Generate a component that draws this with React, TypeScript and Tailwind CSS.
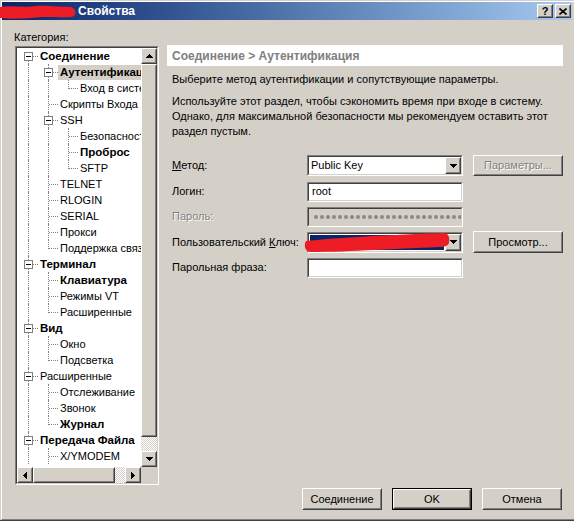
import React from "react";

type Row = {
  t: string;
  l: number;
  b?: boolean;
  e?: boolean;
  last?: boolean;
  first?: boolean;
  sel?: boolean;
  anc: boolean[];
};

const rows: Row[] = [
  { t: "Соединение", l: 0, b: true, e: true, first: true, anc: [] },
  { t: "Аутентификация", l: 1, b: true, e: true, sel: true, anc: [true] },
  { t: "Вход в систему", l: 2, last: true, anc: [true, true] },
  { t: "Скрипты Входа", l: 1, anc: [true] },
  { t: "SSH", l: 1, e: true, anc: [true] },
  { t: "Безопасность", l: 2, anc: [true, true] },
  { t: "Проброс", l: 2, b: true, anc: [true, true] },
  { t: "SFTP", l: 2, last: true, anc: [true, true] },
  { t: "TELNET", l: 1, anc: [true] },
  { t: "RLOGIN", l: 1, anc: [true] },
  { t: "SERIAL", l: 1, anc: [true] },
  { t: "Прокси", l: 1, anc: [true] },
  { t: "Поддержка связи", l: 1, last: true, anc: [true] },
  { t: "Терминал", l: 0, b: true, e: true, anc: [] },
  { t: "Клавиатура", l: 1, b: true, anc: [true] },
  { t: "Режимы VT", l: 1, anc: [true] },
  { t: "Расширенные", l: 1, last: true, anc: [true] },
  { t: "Вид", l: 0, b: true, e: true, anc: [] },
  { t: "Окно", l: 1, anc: [true] },
  { t: "Подсветка", l: 1, last: true, anc: [true] },
  { t: "Расширенные", l: 0, e: true, anc: [] },
  { t: "Отслеживание", l: 1, anc: [true] },
  { t: "Звонок", l: 1, anc: [true] },
  { t: "Журнал", l: 1, b: true, last: true, anc: [true] },
  { t: "Передача Файла", l: 0, b: true, e: true, anc: [] },
  { t: "X/YMODEM", l: 1, anc: [true] },
];

function Raised({
  className = "",
  inner = "",
  children,
}: {
  className?: string;
  inner?: string;
  children?: React.ReactNode;
}) {
  return (
    <div
      className={`border border-t-white border-l-white border-r-[#404040] border-b-[#404040] bg-[#d4d0c8] ${className}`}
    >
      <div
        className={`h-full w-full border border-t-[#d4d0c8] border-l-[#d4d0c8] border-r-[#808080] border-b-[#808080] ${inner}`}
      >
        {children}
      </div>
    </div>
  );
}

function Sunken({
  className = "",
  inner = "",
  children,
}: {
  className?: string;
  inner?: string;
  children?: React.ReactNode;
}) {
  return (
    <div
      className={`border border-t-[#808080] border-l-[#808080] border-r-white border-b-white ${className}`}
    >
      <div
        className={`h-full w-full border border-t-[#404040] border-l-[#404040] border-r-[#d4d0c8] border-b-[#d4d0c8] ${inner}`}
      >
        {children}
      </div>
    </div>
  );
}

function Arrow({ d }: { d: "up" | "down" | "left" | "right" }) {
  if (d === "up" || d === "down") {
    const r =
      d === "up"
        ? [
            [3, 0, 1],
            [2, 1, 3],
            [1, 2, 5],
            [0, 3, 7],
          ]
        : [
            [0, 0, 7],
            [1, 1, 5],
            [2, 2, 3],
            [3, 3, 1],
          ];
    return (
      <svg width="7" height="4" viewBox="0 0 7 4" shapeRendering="crispEdges">
        {r.map(([x, y, w], i) => (
          <rect key={i} x={x} y={y} width={w} height={1} fill="#000" />
        ))}
      </svg>
    );
  }
  const r =
    d === "left"
      ? [
          [0, 3, 1],
          [1, 2, 3],
          [2, 1, 5],
          [3, 0, 7],
        ]
      : [
          [0, 0, 7],
          [1, 1, 5],
          [2, 2, 3],
          [3, 3, 1],
        ];
  return (
    <svg width="4" height="7" viewBox="0 0 4 7" shapeRendering="crispEdges">
      {r.map(([x, y, h], i) => (
        <rect key={i} x={x} y={y} width={1} height={h} fill="#000" />
      ))}
    </svg>
  );
}

function SBtn({ d }: { d: "up" | "down" | "left" | "right" }) {
  return (
    <Raised
      className="h-[16px] w-[16px] shrink-0"
      inner="flex items-center justify-center"
    >
      <Arrow d={d} />
    </Raised>
  );
}

function TreeRow({ r }: { r: Row }) {
  return (
    <div className="flex h-[16px] items-center whitespace-nowrap">
      {r.anc.map((c, i) => (
        <div key={i} className="relative h-[16px] w-[20px] shrink-0">
          {c && (
            <div className="absolute left-[10px] top-0 h-[16px] border-l border-dotted border-[#808080]" />
          )}
        </div>
      ))}
      <div className="relative h-[16px] w-[20px] shrink-0">
        <div
          className={`absolute left-[10px] border-l border-dotted border-[#808080] ${
            r.first ? "top-[8px] h-[8px]" : r.last ? "top-0 h-[9px]" : "top-0 h-[16px]"
          }`}
        />
        <div className="absolute left-[11px] top-[8px] w-[9px] border-t border-dotted border-[#808080]" />
        {r.e && (
          <div className="absolute left-[6px] top-[4px] flex h-[9px] w-[9px] items-center justify-center border border-[#808080] bg-white">
            <div className="h-[1px] w-[5px] bg-black" />
          </div>
        )}
      </div>
      <span
        className={`h-[15px] px-[2px] leading-[15px] ${r.b ? "text-[11.5px] font-bold" : ""} ${
          r.sel ? "bg-[#d4d0c8]" : ""
        }`}
      >
        {r.t}
      </span>
    </div>
  );
}

function Btn({
  label,
  w = "w-[80px]",
  disabled = false,
  def = false,
  h = "h-[22px]",
}: {
  label: string;
  w?: string;
  disabled?: boolean;
  def?: boolean;
  h?: string;
}) {
  const text = (
    <span
      className={
        disabled
          ? "text-[#808080] [text-shadow:1px_1px_0_#ffffff]"
          : "text-black"
      }
    >
      {label}
    </span>
  );
  if (def) {
    return (
      <div className={`${w} ${h} shrink-0 border border-black`}>
        <Raised className="h-full w-full" inner="flex items-center justify-center">
          {text}
        </Raised>
      </div>
    );
  }
  return (
    <Raised className={`${w} ${h} shrink-0`} inner="flex items-center justify-center">
      {text}
    </Raised>
  );
}

function DropBtn() {
  return (
    <Raised
      className="h-[17px] w-[16px] shrink-0"
      inner="flex items-center justify-center"
    >
      <Arrow d="down" />
    </Raised>
  );
}

export default function App() {
  return (
    <div className="h-[521px] w-[574px] overflow-hidden border-b border-b-[#404040] bg-[#d4d0c8] pl-[1px] pt-[1px] text-[11px] text-black font-['Liberation_Sans',Arial,sans-serif]">
      <div className="h-full border-l border-t border-b border-l-white border-t-white border-b-[#808080]">
        {/* Title bar */}
        <div className="mr-[2px] flex h-[18px] items-center bg-linear-to-r from-[#0a246a] to-[#a6caf0]">
          <svg width="76" height="18" viewBox="0 0 76 18" className="-ml-[2px] shrink-0">
            <path
              d="M0 5 C12 3 24 6 36 4 C48 3 60 5 71 5 C77 7 77 14 71 15 C58 16 46 14 32 16 C20 17 9 17 0 16 Z"
              fill="#ee1c24"
            />
          </svg>
          <span className="ml-[2px] text-[12px] font-bold text-white">Свойства</span>
          <div className="ml-auto flex items-center gap-[2px] pr-[1px]">
            <Raised className="h-[14px] w-[16px]" inner="flex items-center justify-center">
              <span className="text-[11px] font-bold leading-none">?</span>
            </Raised>
            <Raised className="h-[14px] w-[16px]" inner="flex items-center justify-center">
              <svg width="8" height="7" viewBox="0 0 8 7">
                <path d="M0.5 0.5 L7.5 6.5 M7.5 0.5 L0.5 6.5" stroke="#000" strokeWidth="1.6" />
              </svg>
            </Raised>
          </div>
        </div>

        {/* Body */}
        <div className="flex pl-[13px]">
          {/* Left column */}
          <div className="flex w-[144px] shrink-0 flex-col pt-[10px]">
            <div className="-ml-[1px] h-[14px] leading-[14px]">Категория:</div>
            <Sunken className="mt-[2px] h-[439px] w-[144px]" inner="flex flex-col">
              <div className="flex h-[419px]">
                <div className="h-[419px] w-[124px] overflow-hidden bg-white pl-[1px]">
                  {rows.map((r, i) => (
                    <TreeRow key={i} r={r} />
                  ))}
                </div>
                <div className="flex h-[419px] w-[16px] flex-col">
                  <SBtn d="up" />
                  <Raised className="h-[373px] w-[16px]" />
                  <div className="h-[14px] w-[16px] bg-[image:repeating-conic-gradient(#ffffff_0_25%,#d4d0c8_0_50%)] bg-[length:2px_2px]" />
                  <SBtn d="down" />
                </div>
              </div>
              <div className="flex h-[16px]">
                <SBtn d="left" />
                <Raised className="h-[16px] w-[82px]" />
                <div className="h-[16px] w-[10px] bg-[image:repeating-conic-gradient(#ffffff_0_25%,#d4d0c8_0_50%)] bg-[length:2px_2px]" />
                <SBtn d="right" />
                <div className="h-[16px] w-[16px] bg-[#d4d0c8]" />
              </div>
            </Sunken>
          </div>

          {/* Right column */}
          <div className="ml-[8px] w-[396px] shrink-0 pt-[25px]">
            <div className="flex h-[21px] items-center bg-white pl-[5px] text-[12px] font-bold text-[#808080]">
              Соединение &gt; Аутентификация
            </div>
            <div className="mt-[6px] whitespace-nowrap pl-[5px] leading-[15px]">
              Выберите метод аутентификации и сопутствующие параметры.
            </div>
            <div className="mt-[7px] whitespace-nowrap pl-[5px] leading-[15px]">
              Используйте этот раздел, чтобы сэкономить время при входе в систему.
              <br />
              Однако, для максимальной безопасности мы рекомендуем оставить этот
              <br />
              раздел пустым.
            </div>

            <div className="mt-[16px] flex flex-col pl-[5px]">
              {/* Метод */}
              <div className="flex h-[21px] items-center">
                <div className="w-[135px] shrink-0">
                  <span className="underline">М</span>етод:
                </div>
                <Sunken className="h-[21px] w-[156px] shrink-0" inner="flex items-center bg-white pl-[2px] pr-[0px]">
                  <span className="flex-1">Public Key</span>
                  <DropBtn />
                </Sunken>
                <div className="ml-[10px]">
                  <Btn label="Параметры..." w="w-[90px]" h="h-[21px]" disabled />
                </div>
              </div>

              {/* Логин */}
              <div className="mt-[5px] flex h-[21px] items-center">
                <div className="w-[135px] shrink-0">Логин:</div>
                <Sunken className="h-[20px] w-[156px] shrink-0" inner="flex items-center bg-white pl-[3px]">
                  <span>root</span>
                </Sunken>
              </div>

              {/* Пароль */}
              <div className="mt-[4px] flex h-[21px] items-center">
                <div className="w-[135px] shrink-0 text-[#808080] [text-shadow:1px_1px_0_#ffffff]">
                  Пароль:
                </div>
                <Sunken
                  className="h-[20px] w-[156px] shrink-0"
                  inner="flex items-center gap-[2px] overflow-hidden bg-[#d4d0c8] pl-[5px]"
                >
                  {Array.from({ length: 26 }).map((_, i) => (
                    <div key={i} className="h-[4px] w-[4px] shrink-0 rounded-full bg-[#8a8a8a]" />
                  ))}
                </Sunken>
              </div>

              {/* Ключ */}
              <div className="mt-[4px] flex h-[22px] items-center">
                <div className="w-[135px] shrink-0">
                  Пользовательский <span className="underline">К</span>люч:
                </div>
                <div className="relative h-[21px] w-[156px] shrink-0">
                  <Sunken className="h-[21px] w-[156px]" inner="flex items-center bg-white pl-[1px]">
                    <div className="h-[15px] flex-1 bg-[#0a246a]" />
                    <div className="ml-[1px]" />
                    <DropBtn />
                  </Sunken>
                  <svg
                    width="146"
                    height="22"
                    viewBox="0 0 146 22"
                    className="absolute -left-[3px] top-[0px]"
                  >
                    <path
                      d="M2 9 C30 6 80 3 139 1 C145 1 146 6 145 11 C144 14 140 15 136 15 C110 16 90 17 70 18 C50 19 25 20 6 20 C0 19 0 12 2 9 Z"
                      fill="#ee1c24"
                    />
                  </svg>
                </div>
                <div className="ml-[10px]">
                  <Btn label="Просмотр..." w="w-[90px]" h="h-[22px]" />
                </div>
              </div>

              {/* Парольная фраза */}
              <div className="mt-[4px] flex h-[21px] items-center">
                <div className="w-[135px] shrink-0">Парольная фраза:</div>
                <Sunken className="h-[20px] w-[156px] shrink-0" inner="bg-white" />
              </div>
            </div>
          </div>
        </div>

        {/* Bottom buttons */}
        <div className="mt-[3px] flex justify-end gap-[10px] pr-[12px]">
          <Btn label="Соединение" />
          <Btn label="OK" def />
          <Btn label="Отмена" />
        </div>
      </div>
    </div>
  );
}
